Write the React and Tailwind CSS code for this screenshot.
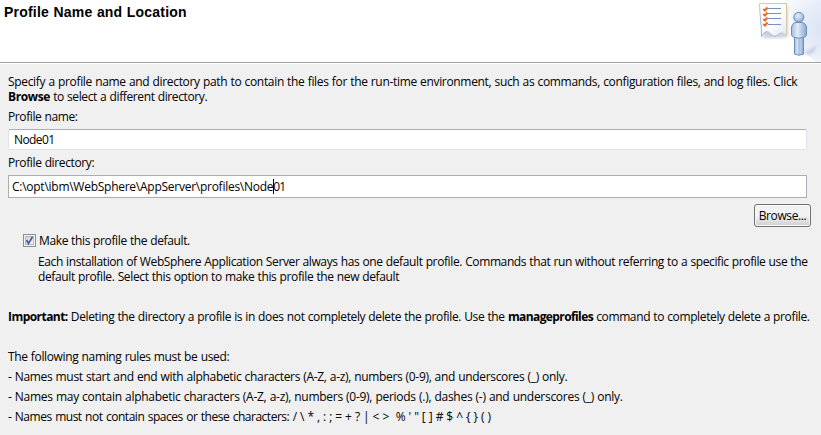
function WizardIcon() {
  return (
    <svg width="81" height="62" viewBox="0 0 81 62" className="block">
      <defs>
        <radialGradient id="sky" gradientUnits="userSpaceOnUse" cx="84" cy="28" r="42">
          <stop offset="0" stopColor="#dbe4f5" />
          <stop offset="0.6" stopColor="#e8eef9" />
          <stop offset="1" stopColor="#f6f9fd" />
        </radialGradient>
        <linearGradient id="paper" x1="0" y1="0" x2="1" y2="1">
          <stop offset="0" stopColor="#ffffff" />
          <stop offset="0.6" stopColor="#f8fbff" />
          <stop offset="1" stopColor="#dce8f7" />
        </linearGradient>
        <linearGradient id="edge" x1="0" y1="1" x2="1" y2="0">
          <stop offset="0.2" stopColor="#8fb2dc" />
          <stop offset="0.55" stopColor="#d9cdb4" />
          <stop offset="1" stopColor="#dcbf8c" />
        </linearGradient>
        <linearGradient id="body" x1="0" y1="0" x2="1" y2="0">
          <stop offset="0" stopColor="#a3bedd" />
          <stop offset="0.4" stopColor="#dfebf8" />
          <stop offset="1" stopColor="#8aa8cf" />
        </linearGradient>
        <radialGradient id="head" cx="0.42" cy="0.35" r="0.65">
          <stop offset="0" stopColor="#e4effa" />
          <stop offset="0.6" stopColor="#b4cbe7" />
          <stop offset="1" stopColor="#86a2cc" />
        </radialGradient>
        <filter id="soft" x="-30%" y="-30%" width="160%" height="160%">
          <feGaussianBlur stdDeviation="1.6" />
        </filter>
      </defs>
      <path d="M42 0C50 4 51 12 51 20C52 38 62 52 76 62H81V0Z" fill="url(#sky)" />
      <path d="M23 6H48V37L38 38L23 38Z" fill="#9aa3b5" opacity="0.5" filter="url(#soft)" />
      <path d="M60 55L78 45L72 54Z" fill="#8093b5" opacity="0.35" filter="url(#soft)" />
      <path d="M19.500 3.500H46.500V35.500C44 33 41 32 38.500 34C35.500 37 32.500 36.500 30.500 34C28 30.500 25 30.500 21.500 36.500C22 26 19.500 15 19.500 3.500Z" fill="url(#paper)" stroke="url(#edge)" />
      <path d="M28 8.500H41M28 13.500H41M28 18.500H41M28 24.500H41" stroke="#7891b8" fill="none" />
      <path d="M23.300 9L25 10.500L27.500 7.500M23.300 14L25 15.500L27.500 12.500M23.300 19L25 20.500L27.500 17.500M23.300 24L25 25.500L27.500 22.500" stroke="#ea6a28" strokeWidth="2" fill="none" />
      <path d="M54.500 36V54Q59 56.500 63.500 54V36Z" fill="url(#body)" stroke="#6a8dba" />
      <path d="M59 39V55" stroke="#8facd2" />
      <path d="M51.500 28Q51.500 23.500 56 22.500H62Q66.500 23.500 66.500 28V35Q65.500 37.500 63.500 37.500Q59 39 54.500 37.500Q52 37 51.500 35Z" fill="url(#body)" stroke="#6a8dba" />
      <ellipse cx="58.800" cy="17.300" rx="5" ry="5" fill="url(#head)" stroke="#6a8dba" />
    </svg>
  );
}

export default function App() {
  return (
    <div className="flex h-[435px] w-[821px] flex-col overflow-hidden bg-[#f0f0f0] font-['Open_Sans','Noto_Sans',sans-serif] text-[12px] leading-[15px] tracking-[-0.35px] whitespace-pre text-black [word-spacing:0.4px]">
      <header className="flex h-[63px] shrink-0 items-start justify-between border-b border-[#a0a0a0] bg-white">
        <h1 className="pt-[4px] pl-[4px] font-['Liberation_Sans',Arial,sans-serif] text-[14px] leading-[16px] font-bold tracking-[0.2px]">Profile Name and Location</h1>
        <WizardIcon />
      </header>
      <main className="flex flex-col items-start border-t border-white pt-[10px] pl-[8px]">
        <p className="tracking-[-0.325px]">Specify a profile name and directory path to contain the files for the run-time environment, such as commands, configuration files, and log files. Click</p>
        <p className="tracking-[-0.38px]"><b>Browse</b> to select a different directory.</p>
        <label className="mt-[5px] tracking-[-0.4px]">Profile name:</label>
        <div className="mt-[5px] flex h-[21px] w-[799px] items-center rounded-[2px] border border-[#e2e3ea] border-t-[#abadb3] bg-white pl-[5px] tracking-[-0.6px]">Node01</div>
        <label className="mt-[5px] tracking-[-0.38px]">Profile directory:</label>
        <div className="mt-[5px] flex h-[23px] w-[799px] items-center border border-[#abadb3] bg-white pl-[3px]">
          <span className="tracking-[-0.26px]">C:\opt\ibm\WebSphere\AppServer\profiles\Node</span>
          <span className="-mr-px h-[15px] w-px bg-black" />
          <span className="tracking-[-0.8px]">01</span>
        </div>
        <button className="mt-[6px] ml-[746px] h-[23px] w-[57px] rounded-[3px] border border-[#707070] bg-linear-to-b from-[#f2f2f2] from-50% to-[#cfcfcf] to-100% text-center tracking-[-0.4px] shadow-[inset_0_0_0_1px_#fafafa]">Browse...</button>
        <div className="mt-[6px] ml-[15px] flex h-[15px] items-center">
          <span className="flex size-[13px] items-center justify-center border border-[#8e8f8f] bg-[#f4f4f4]">
            <span className="flex size-[9px] items-center justify-center border border-[#b5bac3] bg-linear-to-br from-[#d0d4dc] to-[#f6f6f6]">
              <svg width="9" height="9" viewBox="0 0 9 9" className="shrink-0"><path d="M1.500 4L3.500 7.500L7.500 0.800" fill="none" stroke="#4a5f97" strokeWidth="1.700" /></svg>
            </span>
          </span>
          <span className="ml-[3px] tracking-[-0.38px]">Make this profile the default.</span>
        </div>
        <p className="mt-[6px] ml-[30px] tracking-[-0.385px]">Each installation of WebSphere Application Server always has one default profile. Commands that run without referring to a specific profile use the</p>
        <p className="ml-[30px] tracking-[-0.37px]">default profile. Select this option to make this profile the new default</p>
        <p className="mt-[25px] tracking-[-0.37px]"><b className="tracking-[-0.55px]">Important:</b> Deleting the directory a profile is in does not completely delete the profile. Use the <b className="tracking-[-0.6px]">manageprofiles</b> command to completely delete a profile.</p>
        <p className="mt-[25px]">The following naming rules must be used:</p>
        <p className="mt-[5px] tracking-[-0.325px]">- Names must start and end with alphabetic characters (A-Z, a-z), numbers (0-9), and underscores (_) only.</p>
        <p className="mt-[5px] tracking-[-0.28px]">- Names may contain alphabetic characters (A-Z, a-z), numbers (0-9), periods (.), dashes (-) and underscores (_) only.</p>
        <p className="mt-[5px] tracking-[-0.48px] [word-spacing:0.8px]">{"- Names must not contain spaces or these characters: / \\ * , : ; = + ? | < >  % ' \" [ ] # $ ^ { } ( )"}</p>
      </main>
    </div>
  );
}
